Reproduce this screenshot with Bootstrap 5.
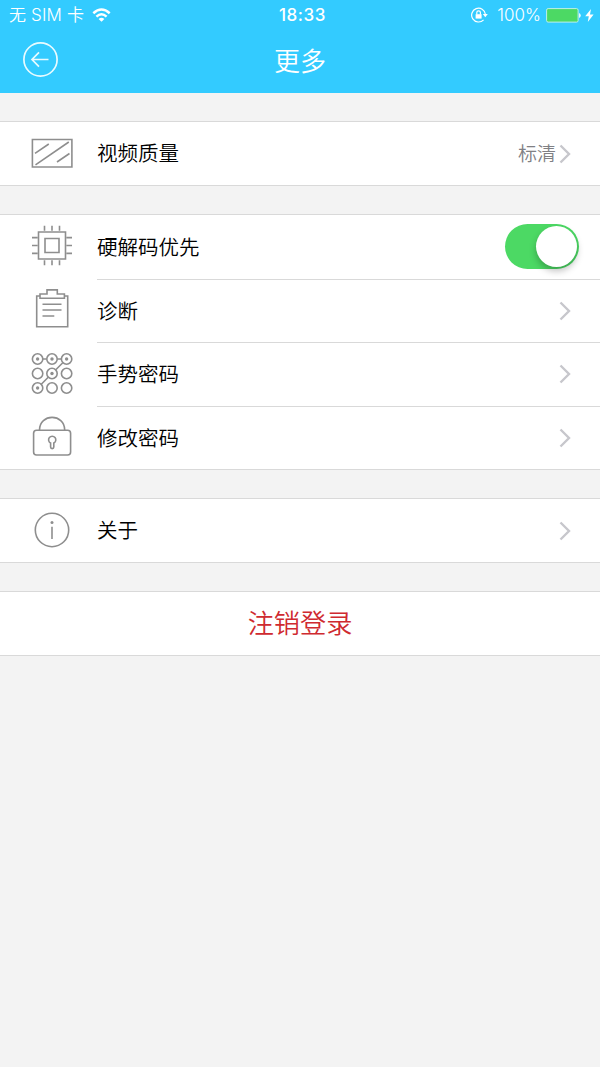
<!DOCTYPE html>
<html lang="zh-CN">
<head>
<meta charset="utf-8">
<meta name="viewport" content="width=device-width, initial-scale=1">
<title>更多</title>
<link href="https://cdn.jsdelivr.net/npm/bootstrap@5.3.0/dist/css/bootstrap.min.css" rel="stylesheet">
<style>
body{background:#f3f3f3;font-family:Inter,"Noto Sans CJK SC",sans-serif;color:#000;font-weight:350;line-height:1}
svg{display:block;flex:none;fill:none}
.topbar{background:#33cbff;height:93px}
.status{height:30px;font-size:17px;padding:0 6px 0 9px}
.status>*{flex:1 1 0}
.carrier{font-size:17px;white-space:pre;letter-spacing:.15px}
.clock{font-weight:500;font-size:17px;letter-spacing:.6px;padding-left:2px}
.pct{margin:0 5px 0 9px}
.bolt{margin-left:4px}
.titlebar{height:60px;padding:0 23px}
.page-title{font-size:26px;font-weight:350;padding-top:3px}
.group{background:#fff;border:solid #d9d9d9;border-width:1px 0;margin-top:28px}
.item{height:63px;padding-left:30px}
.group-tall .item{height:63.5px}
.item svg{stroke:#8e8e8e;stroke-width:1.6}
.item-body{margin-left:23px;padding-right:29px;font-size:20.5px}
.label{padding-top:2px}
.item+.item .item-body{border-top:1px solid #d9d9d9}
.item .chev{stroke:#c7c7cc;stroke-width:2.4}
.value{font-size:19px;color:#808084;margin-right:3px;padding-top:1px}
.toggle{width:74px;height:45px;border-radius:23px;background:#4cd964;padding:2px;margin-right:-8px}
.knob{width:41px;height:41px;border-radius:50%;background:#fff;box-shadow:0 4px 7px rgba(0,0,0,.25)}
.logout{height:63px;font-size:26.2px;color:#cf2a30;padding-top:2px}
</style>
</head>
<body>
<header class="topbar text-white">
  <div class="status d-flex align-items-center">
    <div class="d-flex align-items-center">
      <span class="carrier">无 SIM 卡</span>
      <svg class="ms-2" width="19" height="15" viewBox="0 0 19 15" stroke="#fff" stroke-width="2.5"><path d="M1.3 5.2Q9.5-2.2 17.7 5.2M4.4 8.6Q9.5 4 14.6 8.6"/><path d="M6.6 11Q9.5 8.3 12.4 11L9.5 13.8Z" fill="#fff" stroke="none"/></svg>
    </div>
    <div class="clock text-center">18:33</div>
    <div class="d-flex align-items-center justify-content-end">
      <svg width="17" height="16" viewBox="0 0 17 16" stroke="#fff" stroke-width="1.2"><path d="M12.6 12.8A6.9 6.9 0 1 1 14.4 7.3"/><path d="M11.8 7h5l-2.5 3.2z" fill="#fff" stroke="none"/><path d="M4.6 7.2h6v4.4h-6z" fill="#fff" stroke="none"/><path d="M5.8 7.5V5.6a1.8 1.8 0 0 1 3.6 0v1.9"/></svg>
      <span class="pct">100%</span>
      <svg width="35" height="15" viewBox="0 0 35 15"><rect x=".6" y=".6" width="31.5" height="13.5" rx="1.5" fill="#4cd964" stroke="#bdf0e8"/><path d="M33.1 5v5q1.6-.8 1.6-2.5t-1.6-2.5z" fill="#fff"/></svg>
      <svg class="bolt" width="9" height="13" viewBox="0 0 9 13"><path d="M6 0 .2 7.3h3.6L2.8 13 8.6 5.5H5z" fill="#fff"/></svg>
    </div>
  </div>
  <div class="titlebar d-flex align-items-center justify-content-between">
    <svg width="35" height="36" viewBox="0 0 35 36" stroke="#e9fbff" stroke-width="1.7"><circle cx="17.5" cy="17.5" r="16.6"/><path d="M25.5 17.5H9M16 10.3l-7 7.2 7 7.2"/></svg>
    <h1 class="page-title mb-0">更多</h1>
    <span style="width:35px"></span>
  </div>
</header>
<main>
  <section class="group">
    <div class="item d-flex align-items-center">
      <svg width="44" height="44" viewBox="0 0 44 44"><path d="M2.4 7.5h39.5v27.5H2.4zM5 21.3 18.8 12M5.5 32.8 38.8 10M27 30l12.5-8.5"/></svg>
      <div class="item-body d-flex flex-fill align-items-center align-self-stretch"><span class="label me-auto">视频质量</span><span class="value">标清</span><svg class="chev" width="12" height="20" viewBox="0 0 12 20"><path d="m1.5 1.5 8.5 8.5-8.5 8.5"/></svg></div>
    </div>
  </section>
  <section class="group group-tall">
    <div class="item d-flex align-items-center">
      <svg width="44" height="44" viewBox="0 0 44 44"><g transform="translate(0 -1.2)"><path d="M8.5 8.2h27v27h-27zM15 14.7h14v14H15zM14.5 2v5M22 2v5M29.5 2v5M14.5 36.5v5M22 36.5v5M29.5 36.5v5M2 13.8h5.5M2 21.7h5.5M2 29.6h5.5M36.5 13.8H42M36.5 21.7H42M36.5 29.6H42"/></g></svg>
      <div class="item-body d-flex flex-fill align-items-center align-self-stretch"><span class="label me-auto">硬解码优先</span><div class="toggle d-flex justify-content-end"><div class="knob"></div></div></div>
    </div>
    <div class="item d-flex align-items-center">
      <svg width="44" height="44" viewBox="0 0 44 44"><path d="M10 8H6.7v30.8h31V8h-3.3M10 10.3V6h7V1.9h10.3V6h7.1v4.3zM12.5 16.3h19M12.5 22h19M12.5 28h11.8"/></svg>
      <div class="item-body d-flex flex-fill align-items-center align-self-stretch"><span class="label me-auto">诊断</span><svg class="chev" width="12" height="20" viewBox="0 0 12 20"><path d="m1.5 1.5 8.5 8.5-8.5 8.5"/></svg></div>
    </div>
    <div class="item d-flex align-items-center">
      <svg width="44" height="44" viewBox="0 0 44 44"><path d="M12.9 7h3.8M27.3 7h4M32.8 10.8l-7 7M18.2 25.3l-6.9 7"/><g><circle cx="7.6" cy="7" r="5.2"/><circle cx="22" cy="7" r="5.2"/><circle cx="36.6" cy="7" r="5.2"/><circle cx="7.6" cy="21.5" r="5.2"/><circle cx="22" cy="21.5" r="5.2"/><circle cx="36.6" cy="21.5" r="5.2"/><circle cx="7.6" cy="36" r="5.2"/><circle cx="22" cy="36" r="5.2"/><circle cx="36.6" cy="36" r="5.2"/></g><g fill="#8e8e8e" stroke="none"><circle cx="7.6" cy="7" r="1.7"/><circle cx="22" cy="7" r="1.7"/><circle cx="36.6" cy="7" r="1.7"/><circle cx="22" cy="21.5" r="1.7"/><circle cx="7.6" cy="36" r="1.7"/></g></svg>
      <div class="item-body d-flex flex-fill align-items-center align-self-stretch"><span class="label me-auto">手势密码</span><svg class="chev" width="12" height="20" viewBox="0 0 12 20"><path d="m1.5 1.5 8.5 8.5-8.5 8.5"/></svg></div>
    </div>
    <div class="item d-flex align-items-center">
      <svg width="44" height="44" viewBox="0 0 44 44"><rect x="3.6" y="15.2" width="37" height="24.8" rx="3"/><path d="M9.5 15C9.5-1.8 34.7-1.8 34.7 15M20.6 28a3.6 3.6 0 1 1 3.2 0v4a1.6 1.6 0 0 1-3.2 0z"/></svg>
      <div class="item-body d-flex flex-fill align-items-center align-self-stretch"><span class="label me-auto">修改密码</span><svg class="chev" width="12" height="20" viewBox="0 0 12 20"><path d="m1.5 1.5 8.5 8.5-8.5 8.5"/></svg></div>
    </div>
  </section>
  <section class="group">
    <div class="item d-flex align-items-center">
      <svg width="44" height="44" viewBox="0 0 44 44"><circle cx="22" cy="21" r="16.7"/><path d="M22 17.7v12.2"/><circle cx="22" cy="13.5" r="1.5" fill="#8e8e8e" stroke="none"/></svg>
      <div class="item-body d-flex flex-fill align-items-center align-self-stretch"><span class="label me-auto">关于</span><svg class="chev" width="12" height="20" viewBox="0 0 12 20"><path d="m1.5 1.5 8.5 8.5-8.5 8.5"/></svg></div>
    </div>
  </section>
  <section class="group">
    <div class="logout d-flex align-items-center justify-content-center">注销登录</div>
  </section>
</main>
<script src="https://cdn.jsdelivr.net/npm/bootstrap@5.3.0/dist/js/bootstrap.bundle.min.js"></script>
</body>
</html>
